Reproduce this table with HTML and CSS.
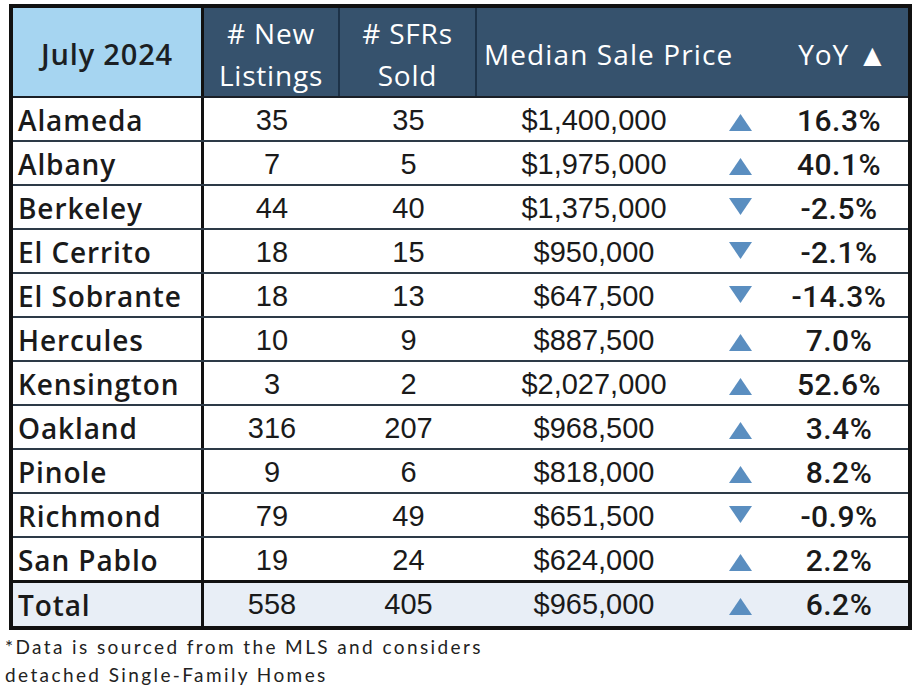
FILE: index.html
```html
<!DOCTYPE html>
<html lang="en">
<head>
<meta charset="utf-8">
<title>July 2024 Market Stats</title>
<link rel="stylesheet" href="styles.css">
</head>
<body>
<div class="table">
  <div class="head">
    <div class="h-month">July 2024</div>
    <div class="h-cell h-div">#&nbsp;New<br>Listings</div>
    <div class="h-cell h-div">#&nbsp;SFRs<br>Sold</div>
    <div class="h-cell h-price">Median Sale Price</div>
    <div class="h-cell h-yoy">YoY&nbsp;<span class="h-tri">▲</span></div>
  </div>
  <div class="row"><div class="name">Alameda</div><div class="num">35</div><div class="num">35</div><div class="num">$1,400,000</div><div class="tri"><svg class="up" width="23" height="17" viewBox="0 0 23 17"><polygon points="11.5,0 23,17 0,17"/></svg></div><div class="pct">16.3%</div></div>
  <div class="row"><div class="name">Albany</div><div class="num">7</div><div class="num">5</div><div class="num">$1,975,000</div><div class="tri"><svg class="up" width="23" height="17" viewBox="0 0 23 17"><polygon points="11.5,0 23,17 0,17"/></svg></div><div class="pct">40.1%</div></div>
  <div class="row"><div class="name">Berkeley</div><div class="num">44</div><div class="num">40</div><div class="num">$1,375,000</div><div class="tri"><svg class="down" width="23" height="17" viewBox="0 0 23 17"><polygon points="0,0 23,0 11.5,17"/></svg></div><div class="pct">-2.5%</div></div>
  <div class="row"><div class="name">El Cerrito</div><div class="num">18</div><div class="num">15</div><div class="num">$950,000</div><div class="tri"><svg class="down" width="23" height="17" viewBox="0 0 23 17"><polygon points="0,0 23,0 11.5,17"/></svg></div><div class="pct">-2.1%</div></div>
  <div class="row"><div class="name">El Sobrante</div><div class="num">18</div><div class="num">13</div><div class="num">$647,500</div><div class="tri"><svg class="down" width="23" height="17" viewBox="0 0 23 17"><polygon points="0,0 23,0 11.5,17"/></svg></div><div class="pct">-14.3%</div></div>
  <div class="row"><div class="name">Hercules</div><div class="num">10</div><div class="num">9</div><div class="num">$887,500</div><div class="tri"><svg class="up" width="23" height="17" viewBox="0 0 23 17"><polygon points="11.5,0 23,17 0,17"/></svg></div><div class="pct">7.0%</div></div>
  <div class="row"><div class="name">Kensington</div><div class="num">3</div><div class="num">2</div><div class="num">$2,027,000</div><div class="tri"><svg class="up" width="23" height="17" viewBox="0 0 23 17"><polygon points="11.5,0 23,17 0,17"/></svg></div><div class="pct">52.6%</div></div>
  <div class="row"><div class="name">Oakland</div><div class="num">316</div><div class="num">207</div><div class="num">$968,500</div><div class="tri"><svg class="up" width="23" height="17" viewBox="0 0 23 17"><polygon points="11.5,0 23,17 0,17"/></svg></div><div class="pct">3.4%</div></div>
  <div class="row"><div class="name">Pinole</div><div class="num">9</div><div class="num">6</div><div class="num">$818,000</div><div class="tri"><svg class="up" width="23" height="17" viewBox="0 0 23 17"><polygon points="11.5,0 23,17 0,17"/></svg></div><div class="pct">8.2%</div></div>
  <div class="row"><div class="name">Richmond</div><div class="num">79</div><div class="num">49</div><div class="num">$651,500</div><div class="tri"><svg class="down" width="23" height="17" viewBox="0 0 23 17"><polygon points="0,0 23,0 11.5,17"/></svg></div><div class="pct">-0.9%</div></div>
  <div class="row last"><div class="name">San Pablo</div><div class="num">19</div><div class="num">24</div><div class="num">$624,000</div><div class="tri"><svg class="up" width="23" height="17" viewBox="0 0 23 17"><polygon points="11.5,0 23,17 0,17"/></svg></div><div class="pct">2.2%</div></div>
  <div class="row total"><div class="name">Total</div><div class="num">558</div><div class="num">405</div><div class="num">$965,000</div><div class="tri"><svg class="up" width="23" height="17" viewBox="0 0 23 17"><polygon points="11.5,0 23,17 0,17"/></svg></div><div class="pct">6.2%</div></div>
</div>
<p class="note">*Data is sourced from the MLS and considers<br>detached Single-Family Homes</p>
</body>
</html>
```
FILE: styles.css
```css
* { box-sizing: border-box; }
html, body { margin: 0; padding: 0; background: #ffffff; }
body { font-family: "Open Sans", "Liberation Sans", sans-serif; color: #111; }

.table {
  margin: 4px 0 0 9px;
  width: 903px;
  border: 4px solid #111;
  background: #fff;
}

.head, .row {
  display: grid;
  grid-template-columns: 191px 136px 137px 234px 59px 138px;
}

.head {
  height: 90px;
  background: #36526d;
  border-bottom: 2px solid #1a1f26;
}

.h-month {
  background: #a6d5f1;
  border-right: 3px solid #111;
  display: flex;
  align-items: center;
  justify-content: center;
  font-weight: 600;
  font-size: 29px;
  letter-spacing: 0.8px;
  color: #1b1f24;
  padding-top: 2px;
}

.h-cell {
  color: #ffffff;
  font-size: 28px;
  letter-spacing: 0.8px;
  line-height: 42px;
  display: flex;
  align-items: center;
  justify-content: center;
  text-align: center;
  padding-top: 3px;
}
.h-div { border-right: 2px solid #1d3248; }
.h-price {
  grid-column: span 2;
  justify-content: flex-start;
  padding-left: 7px;
  letter-spacing: 1.1px;
}
.h-yoy { padding-left: 8px; white-space: nowrap; }
.h-tri { font-size: 31px; letter-spacing: 0; }

.row {
  height: 44px;
  border-bottom: 2px solid #2d3a47;
  font-family: "Liberation Sans", Arial, sans-serif;
  font-size: 29px;
  color: #1a1a1a;
}
.row.last { border-bottom: none; height: 42px; }
.row.total {
  height: 46px;
  border-bottom: none;
  border-top: 3px solid #111;
  background: #e8eef6;
}

.name {
  border-right: 3px solid #111;
  font-family: "Open Sans", sans-serif;
  font-weight: 600;
  font-size: 28px;
  letter-spacing: 0.9px;
  padding-left: 5px;
  display: flex;
  align-items: center;
  padding-top: 2px;
}
.num, .pct, .tri {
  display: flex;
  align-items: center;
  justify-content: center;
  padding-top: 3px;
}
.row.total .name { padding-top: 0; }
.row.total .num, .row.total .pct, .row.total .tri { padding-top: 0; }
.pct { font-family: Roboto, "Liberation Sans", sans-serif; font-weight: 500; font-size: 30px; letter-spacing: 0.5px; }
.tri svg { fill: #5a8ec0; display: block; }
.tri svg.up { margin-top: 4px; }
.tri svg.down { margin-top: -4px; }

.note {
  margin: 3px 0 0 5px;
  font-family: Lato, "DejaVu Sans", sans-serif;
  font-size: 19px;
  line-height: 28px;
  letter-spacing: 2.4px;
  color: #222;
}
```
